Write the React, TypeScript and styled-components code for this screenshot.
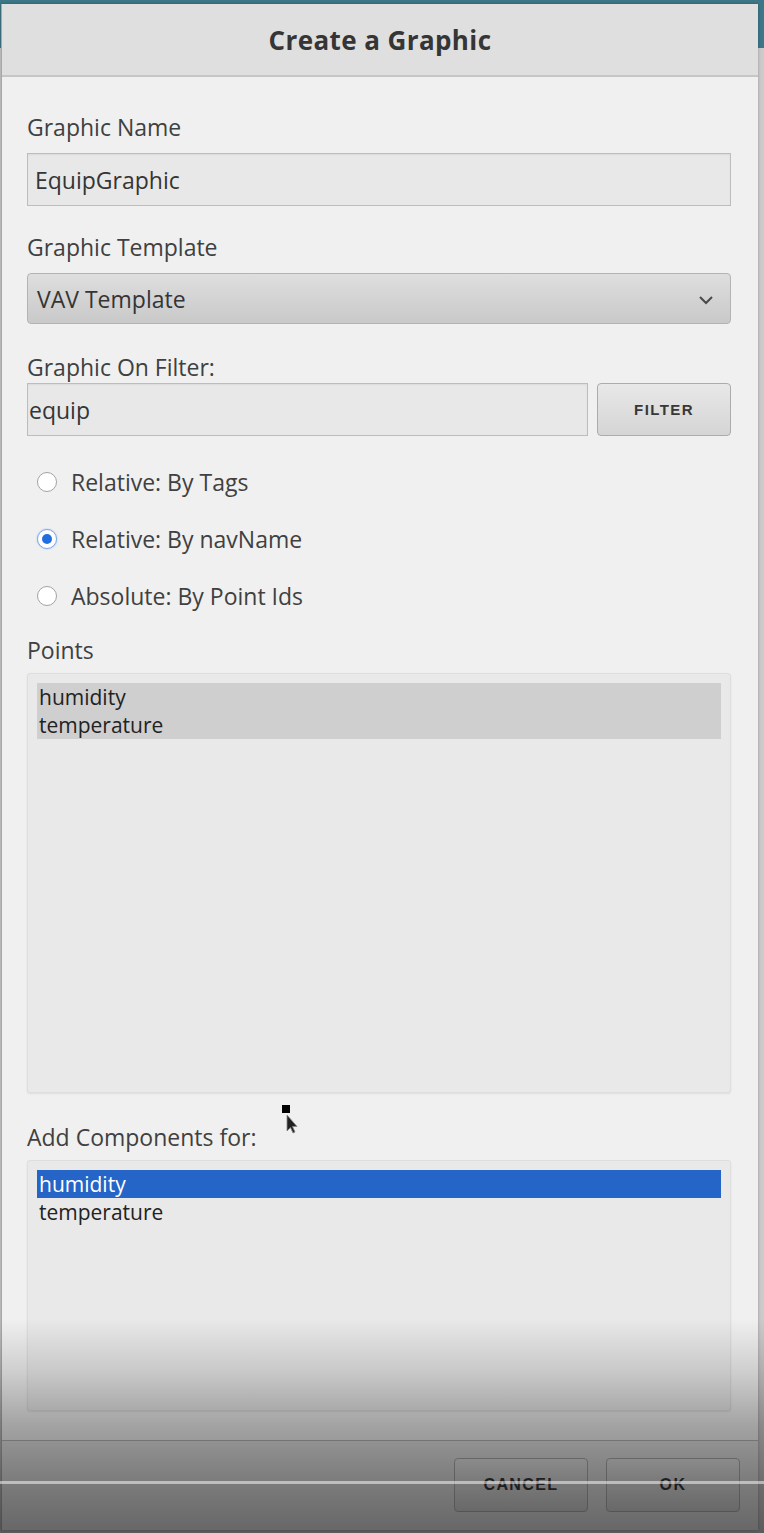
import styled, { createGlobalStyle } from "styled-components";

const GlobalStyle = createGlobalStyle`
    html, body {
        margin: 0;
        padding: 0;
    }
    body {
        font-family: "Open Sans", "Noto Sans", sans-serif;
        background: #cacaca;
    }
`;

type RadioOption = { label: string; checked?: boolean };

const radios: RadioOption[] = [
    { label: "Relative: By Tags" },
    { label: "Relative: By navName", checked: true },
    { label: "Absolute: By Point Ids" },
];

const App = () => {
    return (
        <Page>
            <GlobalStyle />
            <Dialog>
                <Header>
                    <Title>Create a Graphic</Title>
                </Header>

                <Body>
                    <Field>
                        <Label>Graphic Name</Label>
                        <TextBox $padLeft={7}>EquipGraphic</TextBox>
                    </Field>

                    <Field $top={26}>
                        <Label>Graphic Template</Label>
                        <Select>
                            <span>VAV Template</span>
                            <svg width="16" height="10" viewBox="0 0 16 10">
                                <path d="M2 2 L8 8 L14 2" fill="none" stroke="#4a4a4a" strokeWidth="2" />
                            </svg>
                        </Select>
                    </Field>

                    <Field $top={28}>
                        <Label $gap={1}>Graphic On Filter:</Label>
                        <FilterRow>
                            <TextBox $padLeft={1} $grow>equip</TextBox>
                            <GrayButton>FILTER</GrayButton>
                        </FilterRow>
                    </Field>

                    <RadioGroup>
                        {radios.map((r) => (
                            <RadioRow key={r.label}>
                                <RadioDot $checked={r.checked} />
                                <RadioLabel>{r.label}</RadioLabel>
                            </RadioRow>
                        ))}
                    </RadioGroup>

                    <Field $top={11}>
                        <Label $gap={8}>Points</Label>
                        <ListBox $height={420}>
                            <ListItem $state="inactive">humidity</ListItem>
                            <ListItem $state="inactive">temperature</ListItem>
                        </ListBox>
                    </Field>

                    <Field $top={29}>
                        <Label $gap={8}>Add Components for:</Label>
                        <ListBox $height={251}>
                            <ListItem $state="active">humidity</ListItem>
                            <ListItem>temperature</ListItem>
                        </ListBox>
                    </Field>
                </Body>

                <Footer>
                    <GrayButton $wide>CANCEL</GrayButton>
                    <GrayButton $wide>OK</GrayButton>
                </Footer>
            </Dialog>

            {/* mouse pointer caught in the capture */}
            <Pointer width="16" height="30" viewBox="0 0 16 30">
                <rect x="0" y="0" width="8" height="8" fill="#000" />
                <path d="M5 10 L5 26 L8.5 22.5 L11 28 L13 27 L10.5 21.5 L15 21.5 Z" fill="#222" stroke="#888" strokeWidth="0.8" />
            </Pointer>

            {/* video player fade + progress line over the bottom */}
            <BottomShade />
            <ProgressLine />
        </Page>
    );
};

export default App;

/* ================= styled ================= */

const Page = styled.div`
    position: relative;
    width: 764px;
    height: 1533px;
    overflow: hidden;
    padding-top: 4px;
    box-sizing: border-box;
    background: linear-gradient(#3d7787 0 48px, #cbcbcb 48px);
`;

const Dialog = styled.div`
    margin-left: 1px;
    width: 757px;
    height: 1526px;
    display: flex;
    flex-direction: column;
    background: #f0f0f0;
    border-left: 1px solid #a8a8a8;
    box-sizing: border-box;
    box-shadow: 0 0 3px rgba(0, 0, 0, 0.25);
`;

const Header = styled.div`
    height: 71px;
    display: flex;
    align-items: center;
    justify-content: center;
    background: #dfdfdf;
    border-bottom: 2px solid #c6c6c6;
`;

const Title = styled.div`
    font-size: 26px;
    font-weight: 700;
    color: #353535;
    letter-spacing: 0.4px;
    margin-top: 1px;
`;

const Body = styled.div`
    flex: 1;
    display: flex;
    flex-direction: column;
    padding: 35px 27px 0 25px;
`;

const Field = styled.div<{ $top?: number }>`
    display: flex;
    flex-direction: column;
    margin-top: ${({ $top }) => $top ?? 0}px;
`;

const Label = styled.div<{ $gap?: number }>`
    font-size: 23px;
    line-height: 30px;
    color: #404040;
    margin-bottom: ${({ $gap }) => $gap ?? 11}px;
`;

const TextBox = styled.div<{ $padLeft: number; $grow?: boolean }>`
    flex: ${({ $grow }) => ($grow ? 1 : "0 0 auto")};
    height: 53px;
    display: flex;
    align-items: center;
    padding-left: ${({ $padLeft }) => $padLeft}px;
    box-sizing: border-box;
    background: #e8e8e8;
    border: 1px solid #bdbdbd;
    box-shadow: inset 0 1px 2px rgba(0, 0, 0, 0.06);
    font-size: 23px;
    color: #353535;
`;

const Select = styled.div`
    height: 51px;
    display: flex;
    align-items: center;
    justify-content: space-between;
    padding: 0 16px 0 9px;
    box-sizing: border-box;
    background: linear-gradient(#dedede, #c9c9c9);
    border: 1px solid #b3b3b3;
    border-radius: 4px;
    font-size: 23px;
    color: #353535;

    svg {
        margin-top: 3px;
    }
`;

const FilterRow = styled.div`
    display: flex;
    gap: 9px;
`;

const GrayButton = styled.div<{ $wide?: boolean }>`
    width: 134px;
    height: ${({ $wide }) => ($wide ? 54 : 53)}px;
    display: flex;
    align-items: center;
    justify-content: center;
    box-sizing: border-box;
    background: linear-gradient(#e8e8e8, #d5d5d5);
    border: 1px solid #acacac;
    border-radius: 4px;
    font-family: "Liberation Sans", Arial, sans-serif;
    font-weight: 700;
    font-size: ${({ $wide }) => ($wide ? 16 : 15)}px;
    letter-spacing: 1.4px;
    color: #383838;
`;

const RadioGroup = styled.div`
    display: flex;
    flex-direction: column;
    margin-top: 17px;
`;

const RadioRow = styled.div`
    height: 57px;
    display: flex;
    align-items: center;
    padding-left: 10px;
`;

const RadioDot = styled.span<{ $checked?: boolean }>`
    position: relative;
    width: 20px;
    height: 20px;
    border-radius: 50%;
    box-sizing: border-box;
    background: #fff;
    border: 1px solid ${({ $checked }) => ($checked ? "#7fa8e6" : "#a3a3a3")};
    box-shadow: ${({ $checked }) => ($checked ? "0 0 2px #9cc0f2" : "none")};

    &::after {
        content: "";
        display: ${({ $checked }) => ($checked ? "block" : "none")};
        position: absolute;
        inset: 4px;
        border-radius: 50%;
        background: #1f6fde;
    }
`;

const RadioLabel = styled.span`
    margin-left: 14px;
    font-size: 23px;
    color: #404040;
`;

const ListBox = styled.div<{ $height: number }>`
    height: ${({ $height }) => $height}px;
    box-sizing: border-box;
    padding: 9px;
    background: #e9e9e9;
    border: 1px solid #dedede;
    border-radius: 3px;
    box-shadow: 0 1px 2px rgba(0, 0, 0, 0.08);
`;

const ListItem = styled.div<{ $state?: "active" | "inactive" }>`
    height: 28px;
    line-height: 28px;
    padding-left: 2px;
    font-size: 21px;
    color: ${({ $state }) => ($state === "active" ? "#fff" : "#222")};
    background: ${({ $state }) =>
        $state === "active" ? "#2465c7" : $state === "inactive" ? "#cfcfcf" : "transparent"};
`;

const Footer = styled.div`
    flex: 0 0 90px;
    display: flex;
    justify-content: flex-end;
    align-items: flex-start;
    gap: 18px;
    padding: 17px 18px 0 0;
    box-sizing: border-box;
    background: #e3e3e3;
    border-top: 1px solid #b4b4b4;
`;

const Pointer = styled.svg`
    position: absolute;
    left: 282px;
    top: 1105px;
`;

const BottomShade = styled.div`
    position: absolute;
    left: 0;
    right: 0;
    top: 1318px;
    bottom: 0;
    pointer-events: none;
    background: linear-gradient(
        rgba(0, 0, 0, 0) 0%,
        rgba(0, 0, 0, 0.14) 25%,
        rgba(0, 0, 0, 0.32) 50%,
        rgba(0, 0, 0, 0.45) 75%,
        rgba(0, 0, 0, 0.55) 100%
    );
`;

const ProgressLine = styled.div`
    position: absolute;
    left: 0;
    right: 0;
    top: 1481px;
    height: 3px;
    background: rgba(255, 255, 255, 0.5);
`;
